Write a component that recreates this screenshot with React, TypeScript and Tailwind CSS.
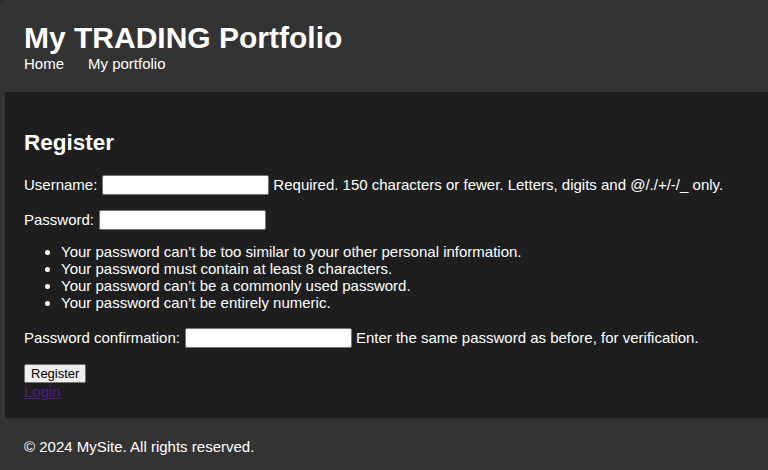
import React from "react";

const font = { fontFamily: '"Liberation Sans", Arial, sans-serif' };

function Field({ label, help }: { label: string; help?: string }) {
  return (
    <div className="flex items-center h-[20px] whitespace-nowrap">
      <label>{label}</label>
      <input
        type="text"
        className="ml-[5px] w-[167px] h-[20px] bg-white border border-[#767676] rounded-[2px] outline-none"
      />
      {help && <span className="ml-[4px]">{help}</span>}
    </div>
  );
}

export default function App() {
  return (
    <div
      className="min-h-[470px] bg-[#2a2a2a] text-white text-[15px] leading-[1.15] overflow-hidden"
      style={font}
    >
      <header className="bg-[#333333] rounded-tl-[8px] pl-[24px] pt-[21px] pb-[20px]">
        <h1 className="text-[30px] font-bold leading-[1.15] m-0">My TRADING Portfolio</h1>
        <nav className="flex gap-[24px] -mt-[1px]">
          <a className="text-white">Home</a>
          <a className="text-white">My portfolio</a>
        </nav>
      </header>
      <div className="bg-[#333333] pl-[5px]">
        <main className="bg-[#1e1e1e] pl-[19px] pt-[38px] pb-[18px]">
          <h2 className="text-[22.5px] font-bold leading-[1.15]">Register</h2>
          <form className="mt-[19px]">
            <Field
              label="Username:"
              help="Required. 150 characters or fewer. Letters, digits and @/./+/-/_ only."
            />
            <div className="mt-[15px]">
              <Field label="Password:" />
            </div>
            <ul className="list-disc pl-[37px] mt-[13px]">
              <li>Your password can’t be too similar to your other personal information.</li>
              <li>Your password must contain at least 8 characters.</li>
              <li>Your password can’t be a commonly used password.</li>
              <li>Your password can’t be entirely numeric.</li>
            </ul>
            <div className="mt-[16px]">
              <Field
                label="Password confirmation:"
                help="Enter the same password as before, for verification."
              />
            </div>
            <button
              type="button"
              className="mt-[16px] block h-[19px] px-[6px] bg-[#efefef] border border-[#767676] rounded-[2px] text-black text-[13px] leading-none"
            >
              Register
            </button>
          </form>
          <a className="text-[#551a8b] underline block">Login</a>
        </main>
      </div>
      <footer className="bg-[#333333] pl-[24px] pt-[20px] pb-[20px]">
        <p>© 2024 MySite. All rights reserved.</p>
      </footer>
    </div>
  );
}
